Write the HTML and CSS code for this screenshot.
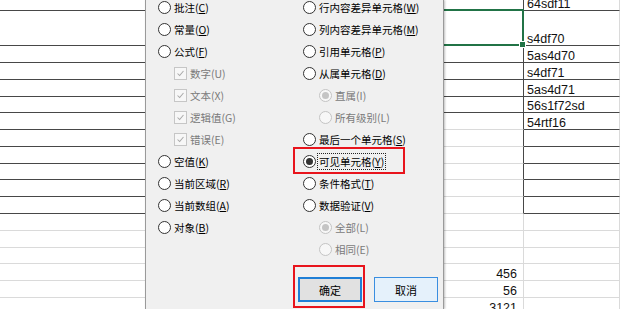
FILE: index.html
```html
<!DOCTYPE html>
<html lang="zh-CN">
<head>
  <meta charset="UTF-8" />
  <title>定位条件</title>
  <link rel="stylesheet" href="styles.css">
</head>
<body>
  <div class="sheet">
    <div class="row h11"><div class="cell dk"></div><div class="cell edge"></div><div class="cell dk">64sdf11</div></div>
    <div class="row h35"><div class="cell dk"></div><div class="cell edge"></div><div class="cell dk">s4df70</div></div>
    <div class="row"><div class="cell dk"></div><div class="cell dk edge"></div><div class="cell dk">5as4d70</div></div>
    <div class="row"><div class="cell dk"></div><div class="cell dk edge"></div><div class="cell dk">s4df71</div></div>
    <div class="row"><div class="cell dk"></div><div class="cell dk edge"></div><div class="cell dk">5as4d71</div></div>
    <div class="row h16"><div class="cell dk"></div><div class="cell dk edge"></div><div class="cell dk">56s1f72sd</div></div>
    <div class="row"><div class="cell dk"></div><div class="cell edge"></div><div class="cell dk">54rtf16</div></div>
    <div class="row"><div class="cell dk"></div><div class="cell edge"></div><div class="cell dk"></div></div>
    <div class="row"><div class="cell dk"></div><div class="cell edge"></div><div class="cell dk"></div></div>
    <div class="row h16"><div class="cell dk"></div><div class="cell edge"></div><div class="cell dk"></div></div>
    <div class="row"><div class="cell dk"></div><div class="cell edge"></div><div class="cell dk"></div></div>
    <div class="row"><div class="cell dk"></div><div class="cell edge"></div><div class="cell dk"></div></div>
    <div class="row"><div class="cell"></div><div class="cell"></div><div class="cell"></div></div>
    <div class="row"><div class="cell"></div><div class="cell"></div><div class="cell"></div></div>
    <div class="row h16"><div class="cell"></div><div class="cell"></div><div class="cell"></div></div>
    <div class="row"><div class="cell"></div><div class="cell num">456</div><div class="cell"></div></div>
    <div class="row"><div class="cell"></div><div class="cell num">56</div><div class="cell"></div></div>
    <div class="row"><div class="cell"></div><div class="cell num">3121</div><div class="cell"></div></div>
  </div>

  <!-- active cell selection -->
  <div class="selection"><span class="handle"></span></div>

  <div class="dialog">
    <div class="opts">
      <div class="col">
        <label class="opt"><span class="radio"></span><span>批注(<u>C</u>)</span></label>
        <label class="opt"><span class="radio"></span><span>常量(<u>O</u>)</span></label>
        <label class="opt"><span class="radio"></span><span>公式(<u>F</u>)</span></label>
        <label class="opt sub off"><span class="check"><svg viewBox="0 0 13 13"><polyline points="3,6.5 5.5,9 10,3.5" /></svg></span><span>数字(U)</span></label>
        <label class="opt sub off"><span class="check"><svg viewBox="0 0 13 13"><polyline points="3,6.5 5.5,9 10,3.5" /></svg></span><span>文本(X)</span></label>
        <label class="opt sub off"><span class="check"><svg viewBox="0 0 13 13"><polyline points="3,6.5 5.5,9 10,3.5" /></svg></span><span>逻辑值(G)</span></label>
        <label class="opt sub off"><span class="check"><svg viewBox="0 0 13 13"><polyline points="3,6.5 5.5,9 10,3.5" /></svg></span><span>错误(E)</span></label>
        <label class="opt"><span class="radio"></span><span>空值(<u>K</u>)</span></label>
        <label class="opt"><span class="radio"></span><span>当前区域(<u>R</u>)</span></label>
        <label class="opt"><span class="radio"></span><span>当前数组(<u>A</u>)</span></label>
        <label class="opt"><span class="radio"></span><span>对象(<u>B</u>)</span></label>
      </div>
      <div class="col">
        <label class="opt"><span class="radio"></span><span>行内容差异单元格(<u>W</u>)</span></label>
        <label class="opt"><span class="radio"></span><span>列内容差异单元格(<u>M</u>)</span></label>
        <label class="opt"><span class="radio"></span><span>引用单元格(<u>P</u>)</span></label>
        <label class="opt"><span class="radio"></span><span>从属单元格(<u>D</u>)</span></label>
        <label class="opt sub off"><span class="radio on"></span><span>直属(I)</span></label>
        <label class="opt sub off"><span class="radio"></span><span>所有级别(L)</span></label>
        <label class="opt"><span class="radio"></span><span>最后一个单元格(<u>S</u>)</span></label>
        <label class="opt"><span class="radio on"></span><span class="focus">可见单元格(<u>Y</u>)</span></label>
        <label class="opt"><span class="radio"></span><span>条件格式(<u>T</u>)</span></label>
        <label class="opt"><span class="radio"></span><span>数据验证(<u>V</u>)</span></label>
        <label class="opt sub off"><span class="radio on"></span><span>全部(L)</span></label>
        <label class="opt sub off"><span class="radio"></span><span>相同(E)</span></label>
      </div>
    </div>

    <div class="btns">
      <button class="btn default">确定</button>
      <button class="btn hover">取消</button>
    </div>

    <!-- red annotation frames -->
    <div class="mark mark-opt"></div>
    <div class="mark mark-btn"></div>
  </div>
</body>
</html>
```

FILE: styles.css
```css
body { margin: 0; width: 620px; height: 309px; overflow: hidden; background: #fff; position: relative; }

.sheet { display: flex; flex-direction: column; }
.row { display: grid; grid-template-columns: 301px 223px 1fr; height: 17px; }
.row.h11 { height: 11px; }
.row.h16 { height: 16px; }
.row.h35 { height: 35px; }
.cell { box-sizing: border-box; display: flex; align-items: flex-end; overflow: hidden; padding: 0 3px; border-bottom: 1px solid #dadada; border-right: 1px solid #dadada; font: 12.5px/12px "Liberation Sans", Arial, sans-serif; color: #111; white-space: nowrap; }
.cell.dk { border-bottom-color: #474747; }
.cell.edge { border-right-color: #474747; }
.cell.num { justify-content: flex-end; padding-right: 6px; }

.selection { position: absolute; left: 300px; top: 9px; width: 224px; height: 37px; box-sizing: border-box; border: 2px solid #217346; }
.handle { position: absolute; right: -4px; bottom: -4px; width: 5px; height: 5px; background: #217346; border: 1px solid #fff; }

.dialog { position: absolute; left: 145px; top: 0; width: 299px; height: 309px; box-sizing: border-box; background: #f0f0f0; border-left: 1px solid #9a9a9a; border-right: 1px solid #9a9a9a; box-shadow: 1px 0 2px rgba(0,0,0,0.25); font: 10.5px "Noto Sans CJK SC", sans-serif; color: #000; }

.opts { display: grid; grid-template-columns: 145px 1fr; margin-top: -4px; padding-left: 12px; }
.col { display: flex; flex-direction: column; }
.opt { height: 22px; display: flex; align-items: center; gap: 3px; white-space: nowrap; }
.opt.sub { padding-left: 16px; }
.opt.off { color: #7a7a7a; }
.opt u { text-underline-offset: 1px; }

.radio { width: 13px; height: 13px; box-sizing: border-box; border: 1px solid #333; border-radius: 50%; background: #fff; display: flex; align-items: center; justify-content: center; flex: none; }
.radio.on::after { content: ""; width: 7px; height: 7px; border-radius: 50%; background: #333; }
.off .radio { border-color: #c4c4c4; background: #f7f7f7; }
.off .radio.on::after { background: #c4c4c4; }

.check { width: 13px; height: 13px; box-sizing: border-box; border: 1px solid #c6c6c6; background: #f7f7f7; flex: none; display: flex; }
.check svg { width: 11px; height: 11px; }
.check polyline { fill: none; stroke: #a8a8a8; stroke-width: 1.2; }

.focus { outline: 1px dotted #222; outline-offset: 0; padding: 0 1px; margin-left: -1px; line-height: 15px; }

.btns { display: flex; gap: 12px; margin-top: 17px; margin-left: 152px; }
.btn { width: 64px; height: 25px; box-sizing: border-box; font: 11px "Noto Sans CJK SC", sans-serif; color: #000; padding: 0; }
.btn.default { background: #e1e1e1; border: 2px solid #1f7fd6; }
.btn.hover { background: #e5f1fb; border: 1px solid #3a8ee0; }

.mark { position: absolute; box-sizing: border-box; border: 2px solid #e8141c; }
.mark-opt { left: 147px; top: 147px; width: 112px; height: 27px; }
.mark-btn { left: 147px; top: 265px; width: 72px; height: 43px; }
```
